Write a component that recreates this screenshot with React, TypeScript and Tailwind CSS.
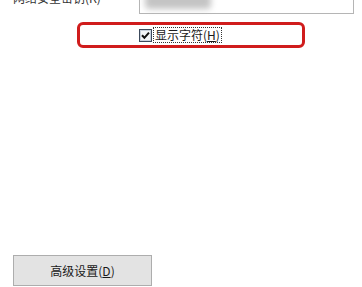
const font = { fontFamily: '"Noto Sans CJK SC", "Liberation Sans", sans-serif' };

function CheckBox() {
  return (
    <svg width="13" height="13" viewBox="0 0 13 13" className="shrink-0">
      <rect x="0.5" y="0.5" width="12" height="12" fill="#ffffff" stroke="#3c4a5c" />
      <rect x="1.5" y="1.5" width="10" height="10" fill="#f4f6f9" stroke="#c9d2de" />
      <path d="M3 6.2 L5.4 8.8 L10 3.6" fill="none" stroke="#111" strokeWidth="2" />
    </svg>
  );
}

export default function App() {
  return (
    <div
      className="w-[362px] h-[287px] bg-white overflow-hidden flex flex-col text-[12px] text-[#1a1a1a]"
      style={font}
    >
      <div className="flex mt-[-11px] h-[25px]">
        <div className="pl-[13px] pt-[2px] w-[139px] leading-[14px] text-[#333]">网络安全密钥(K)</div>
        <div className="w-[215px] h-[25px] border border-[#b5b5b5] bg-white flex items-start pl-[5px]">
          <div className="w-[66px] h-[16px] mt-[3px] bg-[#c4c4c4] blur-[3px] rounded" />
        </div>
      </div>

      <div className="mt-[8px] ml-[77px] w-[228px] h-[26px] border-[3px] border-[#d01c1c] rounded-[6px] flex items-center pl-[59px]">
        <CheckBox />
        <span className="ml-[1px] px-[1px] border border-dotted border-[#333] leading-[14px]">
          显示字符(<span className="underline">H</span>)
        </span>
      </div>

      <div className="flex-1" />

      <div className="ml-[13px] mb-[1px] w-[139px] h-[31px] border border-[#adadad] bg-[#e3e3e3] flex items-center justify-center">
        高级设置(<span className="underline">D</span>)
      </div>
    </div>
  );
}
